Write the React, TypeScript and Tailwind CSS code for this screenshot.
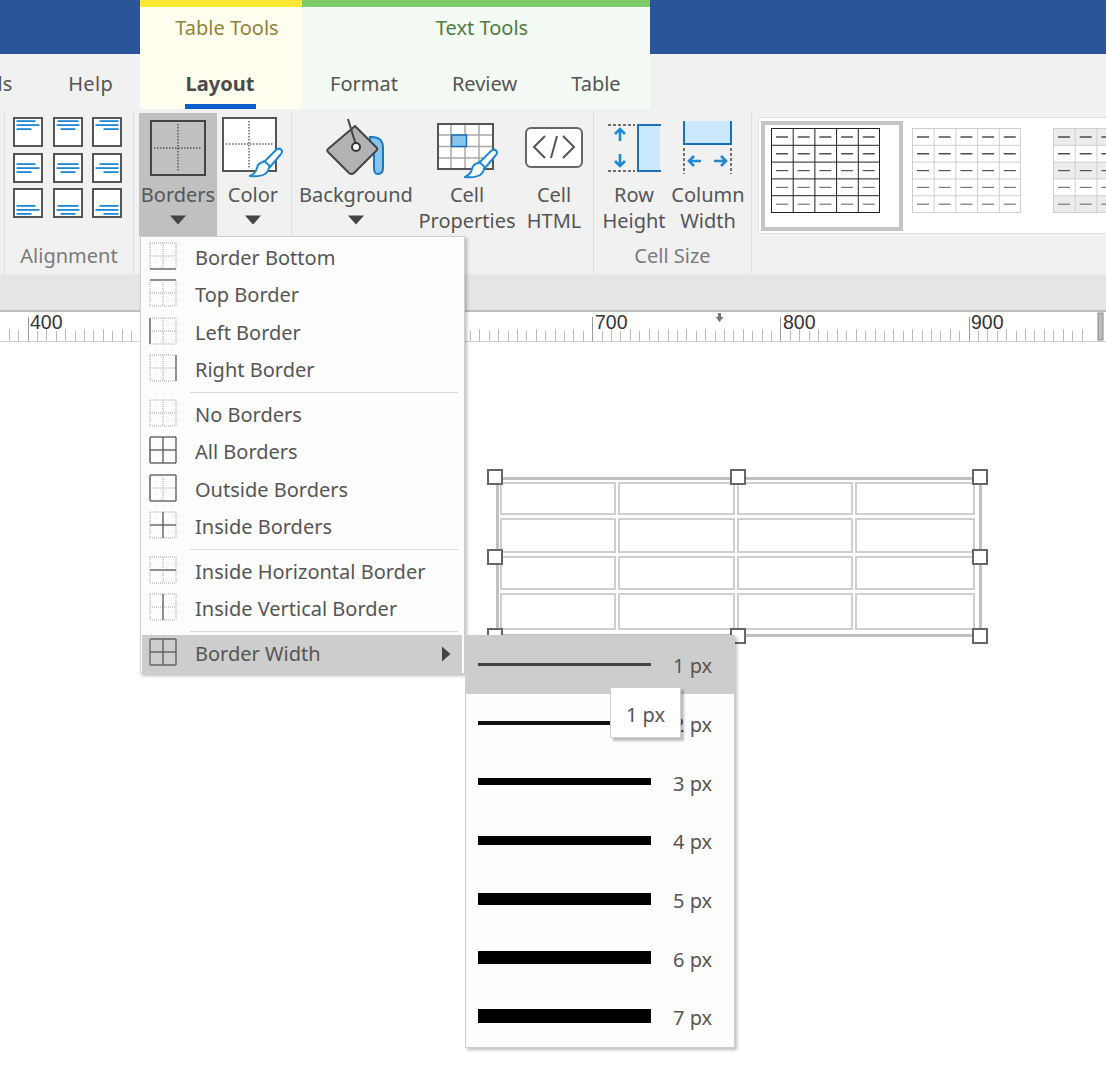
import React from "react";

const FONT = "font-['Noto_Sans','Open_Sans',sans-serif]";

function Caret({ className = "" }: { className?: string }) {
  return (
    <svg width="18" height="10" viewBox="0 0 18 10" className={className}>
      <path d="M1 0.5H17L9 9.5Z" fill="#444" />
    </svg>
  );
}

function Brush({ x, y }: { x: number; y: number }) {
  return (
    <g transform={`translate(${x} ${y})`} stroke="#1e88d2" strokeWidth="2" strokeLinejoin="round" fill="#fff">
      <path d="M15 15 L27 3 Q30 0.5 32 2.5 Q34 4.5 32 7 L21 20 Z" />
      <path d="M14 15 Q9 16 8 21 Q7 26 1 29 Q11 30 16 27 Q20 24 20 20 L21 19 L15 14 Z" />
    </g>
  );
}

function AlignIcon({ row, col }: { row: number; col: number }) {
  const ys = [3.2, 10.2, 17][row];
  const line = (y: number, w: number) => {
    const x = col === 0 ? 3.5 : col === 1 ? 15 - w / 2 : 26.5 - w;
    return <rect x={x} y={y} width={w} height="1.8" fill="#1e88d2" />;
  };
  const w1 = col === 1 ? 21 : 19;
  return (
    <svg width="30" height="30" viewBox="0 0 30 30">
      <rect x="1" y="1" width="28" height="28" fill="#fff" stroke="#555" strokeWidth="2" />
      {line(ys, w1)}
      {line(ys + 4, 23)}
      {line(ys + 8, 15)}
    </svg>
  );
}

function BigBorderIcon() {
  return (
    <svg width="56" height="56" viewBox="0 0 56 56">
      <rect x="1" y="1" width="54" height="54" fill="none" stroke="#444" strokeWidth="2" />
      <path d="M28 4V52M4 28H52" stroke="#555" strokeWidth="1.5" strokeDasharray="1.5 1.5" />
    </svg>
  );
}

function ColorIcon() {
  return (
    <svg width="62" height="62" viewBox="0 0 62 62">
      <rect x="1" y="1" width="53" height="53" fill="#fff" stroke="#555" strokeWidth="2" />
      <path d="M27 4V52M4 27H52" stroke="#666" strokeWidth="1.5" strokeDasharray="1.5 1.5" />
      <Brush x={27} y={30} />
    </svg>
  );
}

function BucketIcon() {
  return (
    <svg width="60" height="60" viewBox="0 0 60 60">
      <path d="M44 19 Q57 18 57 30 L57 50 Q57 56 52 56 Q48 56 48 50 L48 32 Q48 28 44 28 Z" fill="#85c5ee" stroke="#1b78c4" strokeWidth="2" />
      <path d="M29 8 L51 30 Q52 31 50 33 L28 55 Q25.5 57 23 55 L2 34 Q0.5 32 2 31 Z" fill="#b2b2b2" stroke="#444" strokeWidth="2" strokeLinejoin="round" />
      <path d="M22 1 L30 27" stroke="#444" strokeWidth="2" />
      <circle cx="30" cy="29" r="4" fill="#fff" stroke="#333" strokeWidth="2" />
    </svg>
  );
}

function CellPropsIcon() {
  return (
    <svg width="62" height="56" viewBox="0 0 62 56" className="mt-[6px] ml-[1px]">
      <rect x="1" y="1" width="55" height="45" fill="#fff" stroke="#555" strokeWidth="2" />
      <path d="M14 2V45M28 2V45M42 2V45M2 12H55M2 23.5H55M2 35H55" stroke="#aaa" strokeWidth="1.5" />
      <rect x="14.5" y="12" width="15" height="11.5" fill="#85c5ee" stroke="#1b6fb4" strokeWidth="1.5" />
      <Brush x={27} y={25} />
    </svg>
  );
}

function HtmlIcon() {
  return (
    <svg width="58" height="42" viewBox="0 0 58 42">
      <rect x="1" y="1" width="56" height="39" rx="5" fill="#fff" stroke="#666" strokeWidth="2" />
      <path d="M20 9 L9 20 L20 31 M38 9 L49 20 L38 31 M32 9 L26 31" fill="none" stroke="#555" strokeWidth="2" />
    </svg>
  );
}

function RowHeightIcon() {
  return (
    <svg width="54" height="50" viewBox="0 0 54 50">
      <path d="M1 2H28M1 48H28" stroke="#444" strokeWidth="1.5" strokeDasharray="3 2" />
      <path d="M31 2H53V48H31Z" fill="#cce8fd" />
      <path d="M54 2H31V48H54" fill="none" stroke="#1b6fb4" strokeWidth="2" />
      <path d="M13 6V18M8 11L13 6L18 11M13 31V43M8 38L13 43L18 38" fill="none" stroke="#1e88d2" strokeWidth="2.6" />
    </svg>
  );
}

function ColWidthIcon() {
  return (
    <svg width="52" height="54" viewBox="0 0 52 54">
      <path d="M2 0V23H49V0" fill="#cce8fd" stroke="#1b6fb4" strokeWidth="2" />
      <path d="M2 27V53M49 27V53" stroke="#444" strokeWidth="1.5" strokeDasharray="3 2" />
      <path d="M7 40H19M12 35L7 40L12 45M32 40H44M39 35L44 40L39 45" fill="none" stroke="#1e88d2" strokeWidth="2.6" />
    </svg>
  );
}

function RibbonButton({
  label,
  width,
  active,
  caret,
  children,
}: {
  label: string[];
  width: string;
  active?: boolean;
  caret?: boolean;
  children: React.ReactNode;
}) {
  return (
    <div className={`${width} h-[123px] shrink-0 flex flex-col items-center text-[20px] leading-[26px] text-[#555] ${active ? "bg-[#c0c0c0]" : ""}`}>
      <div className="flex items-center justify-center shrink-0 h-[69px]">{children}</div>
      {label.map((l) => (
        <div key={l} className="whitespace-nowrap">{l}</div>
      ))}
      {caret && <Caret className="mt-[7px]" />}
    </div>
  );
}

function Group({ width, label, children }: { width: string; label?: string; children: React.ReactNode }) {
  return (
    <div className={`${width} shrink-0 h-[161px] mt-[3px] flex flex-col border-r border-[#dedede]`}>
      <div className="flex h-[124px] mt-px">{children}</div>
      {label && <div className="mt-[6px] text-center text-[20px] leading-[26px] text-[#7a7a7a]">{label}</div>}
    </div>
  );
}

function StyleThumb({ selected, shaded }: { selected?: boolean; shaded?: boolean }) {
  const grid = selected ? "#222" : "#cfcfcf";
  const cols = [0, 1, 2, 3, 4];
  return (
    <svg width="110" height="86" viewBox="0 0 110 86" className="shrink-0">
      {shaded && [0, 2, 4].map((r) => <rect key={r} x="0" y={r * 17} width="110" height="17" fill="#ececec" />)}
      <rect x="0.5" y="0.5" width="108" height="84" fill="none" stroke={grid} />
      {cols.slice(1).map((c) => (
        <path key={c} d={`M${c * 21.7 + 0.5} 0V85`} stroke={grid} />
      ))}
      {cols.slice(1).map((r) => (
        <path key={r} d={`M0 ${r * 16.8 + 0.5}H109`} stroke={grid} />
      ))}
      {cols.map((r) =>
        cols.map((c) => (
          <path
            key={`${r}-${c}`}
            d={`M${c * 21.7 + 5} ${r * 16.8 + 9}H${c * 21.7 + 17}`}
            stroke={r < 2 ? "#222" : r === 2 ? "#555" : "#777"}
            strokeWidth="1.2"
          />
        )),
      )}
    </svg>
  );
}

type Solid = { t?: boolean; b?: boolean; l?: boolean; r?: boolean; h?: boolean; v?: boolean };

function BorderIcon({ t, b, l, r, h, v }: Solid) {
  const dot = { stroke: "#a5a5a5", strokeDasharray: "1 1", strokeWidth: 1 };
  const solid = { stroke: "#555", strokeWidth: 1.3 };
  const thick = { stroke: "#888", strokeWidth: 2 };
  return (
    <svg width="28" height="28" viewBox="0 0 28 28" className="shrink-0 mb-[4px]">
      <path d="M1 1H27" {...(t ? solid : dot)} />
      <path d="M1 27H27" {...(b ? solid : dot)} />
      <path d="M1 1V27" {...(l ? thick : dot)} />
      <path d="M27 1V27" {...(r ? solid : dot)} />
      <path d="M1 14H27" {...(h ? solid : dot)} />
      <path d="M14 1V27" {...(v ? solid : dot)} />
    </svg>
  );
}

function MenuItem({ label, s, active }: { label: string; s: Solid; active?: boolean }) {
  return (
    <div className={`h-[37.5px] flex items-center pl-[7px] pr-[6px] text-[20px] text-[#555] ${active ? "bg-[#cdcdcd]" : ""}`}>
      <BorderIcon {...s} />
      <span className="ml-[18px] whitespace-nowrap">{label}</span>
      {active && (
        <svg width="10" height="16" viewBox="0 0 10 16" className="ml-auto mr-[5px]">
          <path d="M1 0.5V15.5L9.5 8Z" fill="#444" />
        </svg>
      )}
    </div>
  );
}

function Sep() {
  return (
    <div className="h-[7px] flex items-center pl-[48px] pr-[4px]">
      <div className="h-px w-full bg-[#d9d9d9]" />
    </div>
  );
}

function WidthItem({ n, bar, active }: { n: number; bar: string; active?: boolean }) {
  return (
    <div className={`h-[58.7px] flex items-center pl-[12px] text-[20px] text-[#555] ${active ? "bg-[#cdcdcd]" : ""}`}>
      <div className={`w-[173px] ${bar}`} />
      <span className="ml-[22px] mt-[4px] whitespace-nowrap">{n} px</span>
    </div>
  );
}

function Ruler() {
  const ticks = Array.from({ length: 115 }, (_, i) => i);
  return (
    <div className="relative h-[32px] border-t-2 border-b border-t-[#bdbdbd] border-b-[#cfcfcf] bg-white">
      <svg width="1106" height="29" viewBox="0 0 1106 29" className="block">
        {ticks.map((i) => {
          const x = Math.round(8.8 + 9.41 * i) + 0.5;
          const major = (i - 2) % 20 === 0;
          const mid = i % 2 === 0;
          return <path key={i} d={`M${x} ${major ? 5 : mid ? 17 : 19}V29`} stroke={major ? "#999" : "#bbb"} />;
        })}
        <path d="M718 1H721V5H723.5L719.5 10L715.5 5H718Z" fill="#777" />
        <rect x="1098" y="1" width="5" height="27" fill="#bbb" stroke="#888" />
      </svg>
      {[
        ["400", "left-[30px]"],
        ["700", "left-[595px]"],
        ["800", "left-[783px]"],
        ["900", "left-[971px]"],
      ].map(([t, p]) => (
        <span key={t} className={`absolute top-[-1px] ${p} font-['Liberation_Sans',sans-serif] text-[19.5px] leading-[22px] text-[#333]`}>
          {t}
        </span>
      ))}
    </div>
  );
}

function CanvasTable() {
  const handles = [
    "left-[-12px] top-[-11px]",
    "left-[231px] top-[-11px]",
    "left-[473px] top-[-11px]",
    "left-[-12px] top-[69px]",
    "left-[473px] top-[69px]",
    "left-[-12px] top-[148px]",
    "left-[231px] top-[148px]",
    "left-[473px] top-[148px]",
  ];
  return (
    <div className="absolute left-[496px] top-[477px] w-[486px] h-[160px] border-[3px] border-[#c0c0c0]">
      <div className="grid grid-cols-[116px_117px_116px_120px] grid-rows-[33px_35px_34px_37px] gap-x-[2px] gap-y-[3px] pl-[1px] pt-[2px]">
        {Array.from({ length: 16 }, (_, i) => (
          <div key={i} className="border-2 border-[#cfcfcf] bg-white" />
        ))}
      </div>
      {handles.map((h) => (
        <div key={h} className={`absolute ${h} w-[16px] h-[16px] border-2 border-[#666] bg-white`} />
      ))}
    </div>
  );
}

export default function App() {
  return (
    <div className={`relative w-full h-[1069px] overflow-hidden bg-white ${FONT}`}>
      {/* title + tabs */}
      <div className="flex h-[109px]">
        <div className="w-[140px] shrink-0 flex flex-col">
          <div className="h-[54px] bg-[#2a5699]" />
          <div className="h-[55px] bg-[#f1f1f1] flex justify-end items-center gap-[56px] pr-[27px] pt-[5px] overflow-hidden text-[20px] text-[#555]">
            <span className="shrink-0">Tools</span>
            <span className="shrink-0 tracking-[0.3px]">Help</span>
          </div>
        </div>
        <div className="w-[162px] shrink-0 flex flex-col items-center bg-[#fffeef] border-t-[7px] border-[#ffe835]">
          <div className="h-[47px] flex items-center pb-[5px] pl-[12px] text-[20px] text-[#8f8438]">Table Tools</div>
          <div className="h-[55px] w-[71px] flex flex-col items-center justify-between -ml-[2px]">
            <span className="mt-[17px] text-[20px] leading-[26px] font-bold text-[#4a4a4a]">Layout</span>
            <div className="h-[5px] w-full bg-[#0a5fcc]" />
          </div>
        </div>
        <div className="w-[348px] shrink-0 flex flex-col bg-[#f4faf4] border-t-[7px] border-[#7ecb6a]">
          <div className="h-[47px] flex items-center justify-center pb-[5px] pl-[12px] text-[20px] text-[#4f7a45]">Text Tools</div>
          <div className="h-[55px] flex items-center pt-[5px] text-[20px] text-[#555]">
            <span className="ml-[28px]">Format</span>
            <span className="ml-[54px]">Review</span>
            <span className="ml-[54px]">Table</span>
          </div>
        </div>
        <div className="flex-1 flex flex-col">
          <div className="h-[54px] bg-[#2a5699]" />
          <div className="h-[55px] bg-[#f1f1f1]" />
        </div>
      </div>

      {/* ribbon */}
      <div className="h-[166px] bg-[#f1f1f1] border-b border-[#e8e8e8] flex overflow-hidden">
        <div className="w-[5px] shrink-0 h-[161px] mt-[3px] border-r border-[#dedede]" />
        <Group width="w-[129px]" label="Alignment">
          <div className="grid grid-cols-[30px_30px_30px] grid-rows-[30px_30px_30px] gap-x-[9.5px] gap-y-[5.5px] ml-[8px] mt-[4px]">
            {[0, 1, 2].map((r) => [0, 1, 2].map((c) => <AlignIcon key={`${r}${c}`} row={r} col={c} />))}
          </div>
        </Group>
        <Group width="w-[158px]">
          <div className="w-[5px]" />
          <RibbonButton label={["Borders"]} width="w-[78px]" active caret>
            <BigBorderIcon />
          </RibbonButton>
          <RibbonButton label={["Color"]} width="w-[72px]" caret>
            <ColorIcon />
          </RibbonButton>
        </Group>
        <Group width="w-[302px]">
          <RibbonButton label={["Background"]} width="w-[128px]" caret>
            <BucketIcon />
          </RibbonButton>
          <RibbonButton label={["Cell", "Properties"]} width="w-[94px]">
            <CellPropsIcon />
          </RibbonButton>
          <RibbonButton label={["Cell", "HTML"]} width="w-[80px]">
            <HtmlIcon />
          </RibbonButton>
        </Group>
        <Group width="w-[158px]" label="Cell Size">
          <RibbonButton label={["Row", "Height"]} width="w-[80px]">
            <RowHeightIcon />
          </RibbonButton>
          <RibbonButton label={["Column", "Width"]} width="w-[68px]">
            <ColWidthIcon />
          </RibbonButton>
        </Group>
        <div className="ml-[6px] mt-[8px] h-[117px] flex-1 bg-white border border-r-0 border-[#dfdfdf] flex items-start pl-[2px] pt-[3px] overflow-hidden">
          <div className="w-[142px] h-[110px] shrink-0 border-[4px] border-[#c4c4c4] pl-[6px] pt-[3px]">
            <StyleThumb selected />
          </div>
          <div className="ml-[9px] mt-[7px]">
            <StyleThumb />
          </div>
          <div className="ml-[31px] mt-[7px]">
            <StyleThumb shaded />
          </div>
        </div>
      </div>

      {/* grey band */}
      <div className="h-[35px] bg-[#e5e5e5]" />
      <Ruler />

      <CanvasTable />

      {/* Borders menu */}
      <div className="absolute left-[140px] top-[236px] w-[325px] h-[438px] bg-[#fdfdfd] border border-[#cfcfcf] pt-[2px] pl-[1px] pr-[2px] shadow-[2px_2px_3px_rgba(0,0,0,0.25)]">
        <MenuItem label="Border Bottom" s={{ b: true }} />
        <MenuItem label="Top Border" s={{ t: true }} />
        <MenuItem label="Left Border" s={{ l: true }} />
        <MenuItem label="Right Border" s={{ r: true }} />
        <Sep />
        <MenuItem label="No Borders" s={{}} />
        <MenuItem label="All Borders" s={{ t: true, b: true, l: true, r: true, h: true, v: true }} />
        <MenuItem label="Outside Borders" s={{ t: true, b: true, l: true, r: true }} />
        <MenuItem label="Inside Borders" s={{ h: true, v: true }} />
        <Sep />
        <MenuItem label="Inside Horizontal Border" s={{ h: true }} />
        <MenuItem label="Inside Vertical Border" s={{ v: true }} />
        <Sep />
        <MenuItem label="Border Width" s={{ t: true, b: true, l: true, r: true, h: true, v: true }} active />
      </div>

      {/* Border width submenu */}
      <div className="absolute left-[465px] top-[635px] w-[270px] h-[413px] bg-[#fdfdfd] border-r border-b border-l border-[#cfcfcf] shadow-[2px_2px_3px_rgba(0,0,0,0.25)]">
        <WidthItem n={1} bar="h-[3px] bg-[#444]" active />
        <WidthItem n={2} bar="h-[4px] bg-[#111]" />
        <WidthItem n={3} bar="h-[7px] bg-black" />
        <WidthItem n={4} bar="h-[9px] bg-black" />
        <WidthItem n={5} bar="h-[12px] bg-black" />
        <WidthItem n={6} bar="h-[13px] bg-black" />
        <WidthItem n={7} bar="h-[14px] bg-black" />
      </div>

      {/* tooltip */}
      <div className="absolute left-[610px] top-[687px] w-[71px] h-[51px] bg-white border border-[#cfcfcf] pt-[4px] flex items-center justify-center text-[20px] text-[#555] shadow-[3px_3px_2px_rgba(0,0,0,0.25)]">
        1 px
      </div>
    </div>
  );
}
